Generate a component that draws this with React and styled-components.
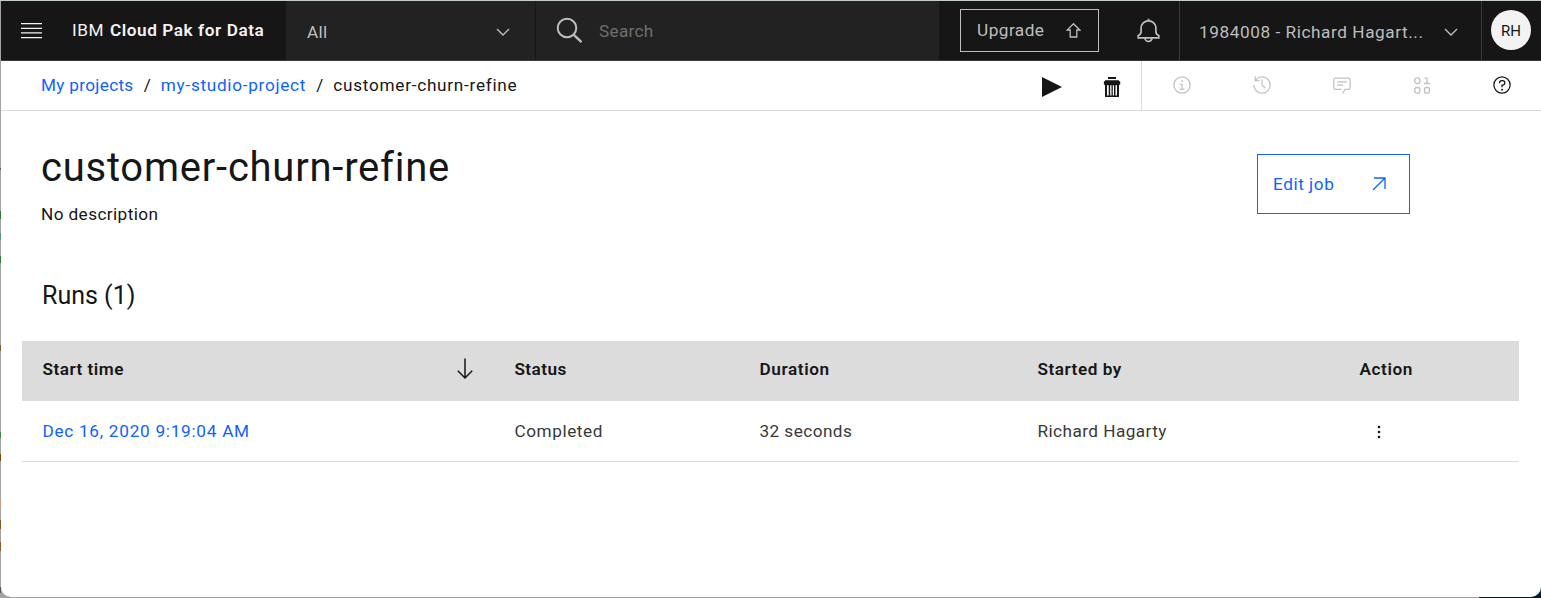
import React from "react";
import styled, { createGlobalStyle } from "styled-components";

const Global = createGlobalStyle`
  * { box-sizing: border-box; }
  body { margin: 0; background: #fff; font-family: Roboto, "Liberation Sans", sans-serif; font-size: 17.2px; }
`;
const Desktop = styled.div`
  width: 1541px; height: 598px; padding: 1px 0 1px 1px; overflow: hidden;
  background:
    linear-gradient(#c5cccc, #c5cccc) 0 0 / 100% 1px no-repeat,
    linear-gradient(#7a5a30, #7a5a30) 0 168px / 1px 2px no-repeat,
    linear-gradient(#2f7a35, #2f7a35) 0 211px / 1px 8px no-repeat,
    linear-gradient(#4f9a78, #4f9a78) 0 233px / 1px 7px no-repeat,
    linear-gradient(#2f7a35, #2f7a35) 0 256px / 1px 7px no-repeat,
    linear-gradient(#8a5a25, #8a5a25) 0 345px / 1px 6px no-repeat,
    linear-gradient(#3a8a4a, #3a8a4a) 0 432px / 1px 6px no-repeat,
    linear-gradient(#7a4a10, #7a4a10) 0 454px / 1px 7px no-repeat,
    linear-gradient(#c0a080, #c0a080) 0 498px / 1px 9px no-repeat,
    linear-gradient(#8a5a25, #8a5a25) 0 520px / 1px 9px no-repeat,
    linear-gradient(#8a5a25, #8a5a25) 0 542px / 1px 9px no-repeat,
    linear-gradient(#555, #555) 0 587px / 1px 6px no-repeat,
    linear-gradient(#0b1c26, #0b1c26) 1479px 580px / 62px 18px no-repeat,
    #a3a3a3;
`;
const Window = styled.div`
  height: 596px; background: #fff; border-radius: 0 0 10px 10px; overflow: hidden;
`;
const Label = styled.span`
  white-space: pre;
  letter-spacing: ${(p) => p.$ls || 0}px;
  font-weight: ${(p) => p.$weight || 400};
`;
const Header = styled.header`
  display: flex; height: 60px; background: #161616; color: #bebebe; border-bottom: 1px solid #393939;
`;
const Brand = styled.div`
  width: 285px; padding-left: 20px; display: flex; align-items: center; color: #f3f3f3; line-height: 20px;
`;
const BrandName = styled.div`margin: 0 0 2px 30px; display: flex; gap: 6px;`;
const Scope = styled.div`
  width: 250px; padding: 3px 25px 0 21px; display: flex; align-items: center; justify-content: space-between;
  background: #222; border-right: 1px solid #161616;
`;
const Search = styled.div`
  width: 403px; padding-left: 20px; display: flex; align-items: center; gap: 16px; background: #222; color: #6f6f6f;
`;
const UpgradeButton = styled.button`
  width: 139px; height: 43px; margin: 8px 0 0 21px; padding: 0 17px 2px 16px; display: flex; align-items: center;
  justify-content: space-between; font: inherit; color: #bebebe; background: none; border: 1px solid #bebebe;
`;
const BellButton = styled.div`
  width: 80px; padding-left: 38px; display: flex; align-items: center;
`;
const Account = styled.div`
  width: 303px; padding: 3px 23px 0 19px; display: flex; align-items: center; justify-content: space-between;
  border-left: 1px solid #393939; border-right: 1px solid #393939;
`;
const Avatar = styled.div`
  width: 40px; height: 40px; margin: 9px 0 0 9px; border-radius: 50%; background: #f3f3f3; color: #161616;
  font-size: 15px; line-height: 42px; text-align: center;
`;
const Toolbar = styled.div`
  height: 50px; display: flex; justify-content: space-between; border-bottom: 1px solid #dcdcdc;
`;
const Crumbs = styled.nav`
  padding-left: 40px; display: flex; line-height: 48px; color: #161616;
`;
const Link = styled(Label)`color: #0f62fe;`;
const Slash = styled.span`width: 27.3px; text-align: center;`;
const Tools = styled.div`display: flex;`;
const RunTools = styled.div`
  width: 100px; padding: 2px 20px 0 0; display: flex; align-items: center; justify-content: space-between;
  border-right: 1px solid #dcdcdc;
`;
const PanelTools = styled.div`
  width: 399px; padding: 0 29px 1px 30px; display: flex; align-items: center; justify-content: space-between; color: #c1c1c1;
`;
const Intro = styled.section`
  height: 230px; padding: 29px 131px 0 40px; display: flex; justify-content: space-between; color: #161616;
`;
const Title = styled.h1`margin: 0; font-size: 40px; font-weight: 400; line-height: 56px;`;
const Description = styled.p`margin: 6px 0 0; line-height: 24px;`;
const Runs = styled.h2`margin: 54px 0 0 1px; font-size: 25px; font-weight: 400; line-height: 32px;`;
const EditButton = styled.button`
  width: 153px; height: 60px; margin-top: 14px; padding: 0 22px 0 15px; display: flex; align-items: center;
  justify-content: space-between; font: inherit; color: #0f62fe; background: #fff; border: 1px solid #0f62fe;
`;
const Table = styled.div`margin: 0 22px 0 21px;`;
const Row = styled.div`
  display: grid; grid-template-columns: 472px 245px 278px 322px 180px; height: ${(p) => (p.$head ? 60 : 61)}px;
  line-height: ${(p) => (p.$head ? 56 : 60)}px;
  background: ${(p) => (p.$head ? "#dcdcdc" : "#fff")}; color: ${(p) => (p.$head ? "#161616" : "#393939")};
  border-bottom: ${(p) => (p.$head ? "none" : "1px solid #dcdcdc")};
`;
const Cell = styled.div`padding-left: 20.4px; display: flex;`;
const SortSlot = styled.span`margin: 17px 0 0 auto; padding-right: 20.5px; line-height: 0;`;
const Menu = styled.span`margin: 23px 0 0 17px; line-height: 0;`;

const Icon = ({ size = 20, children, color = "currentColor" }) => (
  <svg width={size} height={size} viewBox="0 0 32 32" fill={color}>{children}</svg>
);
const Ring = () => <path d="M16 2a14 14 0 1 0 14 14A14 14 0 0 0 16 2Zm0 26a12 12 0 1 1 12-12 12 12 0 0 1-12 12Z" />;
const Chevron = () => (
  <svg width="14" height="10" viewBox="0 0 14 10" fill="none" stroke="currentColor" strokeWidth="1.4"><path d="M1 2l6 6 6-6" /></svg>
);

export default function App() {
  return (
    <Desktop>
      <Global />
      <Window>
        <Header>
          <Brand>
            <svg width="21" height="16" viewBox="0 0 21 16" fill="#f3f3f3">
              <path d="M0 0h21v1.3H0zM0 4.7h21V6H0zM0 9.3h21v1.3H0zM0 14h21v1.3H0z" />
            </svg>
            <BrandName><Label $ls={0.5}>IBM</Label><Label $ls={0.57} $weight={600}>Cloud Pak for Data</Label></BrandName>
          </Brand>
          <Scope><Label $ls={0.3}>All</Label><Chevron /></Scope>
          <Search>
            <svg width="27" height="27" viewBox="0 0 27 27" fill="none" stroke="#bebebe" strokeWidth="2"><circle cx="11" cy="11" r="9.3" /><path d="M17.8 17.8l7.7 7.3" strokeWidth="2.4" /></svg>
            <Label $ls={0.3}>Search</Label>
          </Search>
          <UpgradeButton>
            <Label $ls={0.48}>Upgrade</Label>
            <svg width="16" height="16" viewBox="0 0 16 16" fill="none" stroke="currentColor" strokeWidth="1.3"><path d="M8.500 1.700L2.200 8h3V15h6.600V8h3z" /></svg>
          </UpgradeButton>
          <BellButton>
            <svg width="23" height="25" viewBox="0 0 23 25" fill="none" stroke="#bebebe" strokeWidth="1.7"><path d="M11.5 0.8v2M1.200 19.8v-2.300c2-0.700 2.900-2 2.900-4V10.200a7.400 7.400 0 0 1 14.800 0v3.300c0 2 0.900 3.300 2.900 4v2.300zM8 20a3.500 3.500 0 0 0 7 0" /></svg>
          </BellButton>
          <Account><Label $ls={0.57}>1984008 - Richard Hagart...</Label><Chevron /></Account>
          <Avatar>RH</Avatar>
        </Header>
        <Toolbar>
          <Crumbs>
            <Link $ls={0.3}>My projects</Link><Slash>/</Slash>
            <Link $ls={0.7}>my-studio-project</Link><Slash>/</Slash>
            <Label $ls={0.72}>customer-churn-refine</Label>
          </Crumbs>
          <Tools>
            <RunTools>
              <svg width="20" height="20" viewBox="0 0 20 20" fill="#161616"><path d="M0 0l20 10L0 20z" /></svg>
              <svg width="18" height="20" viewBox="0 0 18 20" fill="#161616"><path fillRule="evenodd" d="M5 0h8v2H5zM2 3.3h14v1h1.200v3.400H16V20H2V7.700H0.900V4.300H2zM4 8.200V18.500H5.700V8.200zM7.200 8.200V18.500H8.500V8.200zM9.800 8.200V18.500H11V8.200zM12.500 8.200V18.500H14V8.200z" /></svg>
            </RunTools>
            <PanelTools>
              <Icon><Ring /><path d="M17 22v-8h-4v2h2v6h-3v2h8v-2zM16 8a1.500 1.500 0 1 0 1.500 1.500A1.500 1.500 0 0 0 16 8Z" /></Icon>
              <Icon><path d="M20.590 22 15 16.410V7h2v8.580l5 5.010zM16 2A13.940 13.940 0 0 0 6 6.230V2H4v8h8V8H7.080A12 12 0 1 1 4 16H2A14 14 0 1 0 16 2Z" /></Icon>
              <Icon><path d="M17.740 30 16 29l4-7h6a2 2 0 0 0 2-2V8a2 2 0 0 0-2-2H6a2 2 0 0 0-2 2v12a2 2 0 0 0 2 2h9v2H6a4 4 0 0 1-4-4V8a4 4 0 0 1 4-4h20a4 4 0 0 1 4 4v12a4 4 0 0 1-4 4h-4.840ZM8 10h16v2H8zM8 15h10v2H8z" /></Icon>
              <Icon><g fill="none" stroke="currentColor" strokeWidth="2.200"><rect x="4.500" y="4.500" width="8" height="9" rx="3" /><rect x="4.500" y="20" width="8" height="9" rx="3" /><rect x="20" y="20" width="8" height="9" rx="3" /><path d="M20 5h4v8M19 13.500h10" /></g></Icon>
              <Icon color="#161616"><Ring /><path d="M17 8h-1.500A4.490 4.490 0 0 0 11 12.500V13h2v-.5a2.500 2.500 0 0 1 2.500-2.500H17a2.500 2.500 0 0 1 0 5h-2v4.500h2V17a4.500 4.500 0 0 0 0-9Z" /><circle cx="16" cy="23.500" r="1.500" /></Icon>
            </PanelTools>
          </Tools>
        </Toolbar>
        <Intro>
          <div>
            <Title><Label $ls={0.76}>customer-churn-refine</Label></Title>
            <Description><Label $ls={0.4}>No description</Label></Description>
            <Runs><Label>Runs (1)</Label></Runs>
          </div>
          <EditButton>
            <Label $ls={0.55}>Edit job</Label>
            <svg width="16" height="16" viewBox="0 0 16 16" fill="none" stroke="currentColor" strokeWidth="1.3"><path d="M3 2h11v11M14 2L2 14" /></svg>
          </EditButton>
        </Intro>
        <Table>
          <Row $head>
            <Cell><Label $ls={0.5} $weight={600}>Start time</Label>
              <SortSlot><svg width="18" height="22" viewBox="0 0 18 22" fill="none" stroke="#161616" strokeWidth="1.5"><path d="M9 0.500v19.500M1.800 12.800L9 20l7.200-7.200" /></svg></SortSlot>
            </Cell>
            <Cell><Label $ls={0.45} $weight={600}>Status</Label></Cell>
            <Cell><Label $ls={0.62} $weight={600}>Duration</Label></Cell>
            <Cell><Label $ls={0.53} $weight={600}>Started by</Label></Cell>
            <Cell><Label $ls={0.6} $weight={600}>Action</Label></Cell>
          </Row>
          <Row>
            <Cell><Link $ls={0.73}>Dec 16, 2020 9:19:04 AM</Link></Cell>
            <Cell><Label $ls={0.57}>Completed</Label></Cell>
            <Cell><Label $ls={0.45}>32 seconds</Label></Cell>
            <Cell><Label $ls={0.45}>Richard Hagarty</Label></Cell>
            <Cell><Menu><svg width="6" height="16" viewBox="0 0 6 16" fill="#161616"><circle cx="3" cy="3" r="1.300" /><circle cx="3" cy="8" r="1.300" /><circle cx="3" cy="13" r="1.300" /></svg></Menu></Cell>
          </Row>
        </Table>
      </Window>
    </Desktop>
  );
}
